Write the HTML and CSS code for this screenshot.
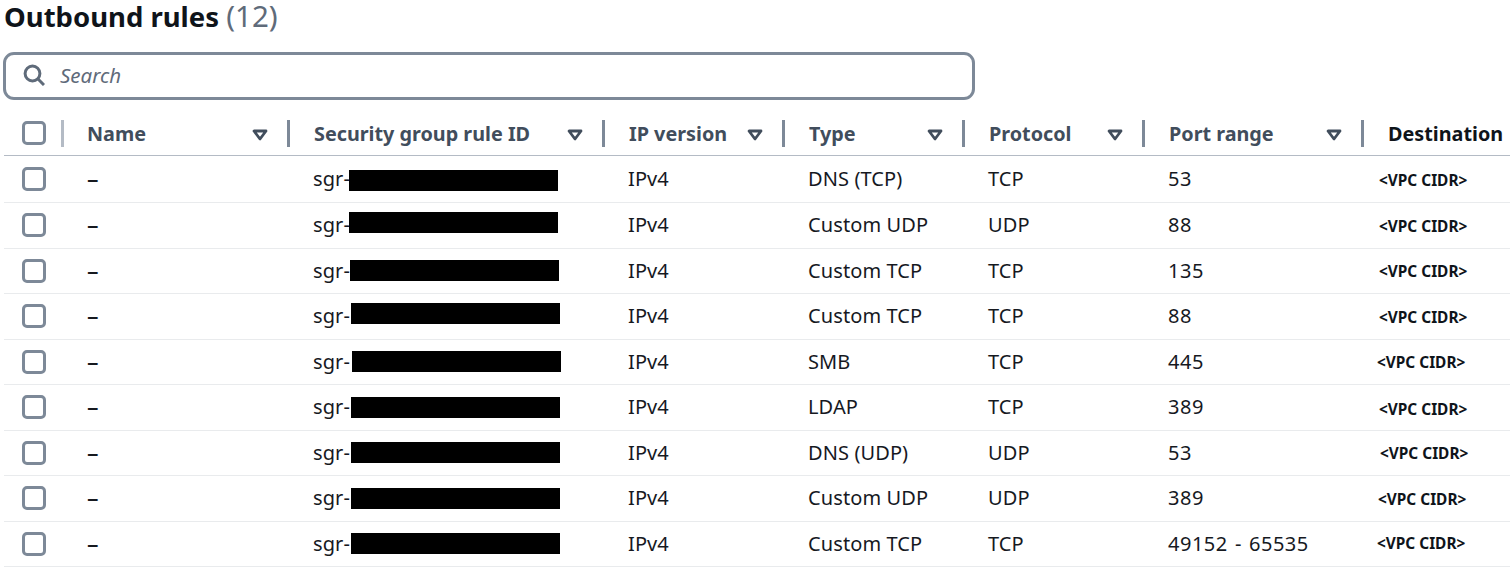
FILE: index.html
```
<!DOCTYPE html>
<html lang="en">
<head>
<meta charset="utf-8">
<title>Outbound rules</title>
<link rel="stylesheet" href="styles.css">
</head>
<body>
<main class="panel">
  <h1 class="title">Outbound rules <span class="count">(12)</span></h1>
  <div class="search">
    <svg class="search-icon" viewBox="0 0 22 22" aria-hidden="true"><circle cx="9.5" cy="9.5" r="7.4"/><path d="M14.8 14.8 21 21"/></svg>
    <span class="search-text">Search</span>
  </div>
  <div class="table">
    <div class="row head">
      <div class="cell check"><span class="box"></span></div>
      <div class="cell name sep-light">Name<svg class="sort" viewBox="0 0 16 12"><path d="M2 2h12L8 10z"/></svg></div>
      <div class="cell id">Security group rule ID<svg class="sort" viewBox="0 0 16 12"><path d="M2 2h12L8 10z"/></svg></div>
      <div class="cell ip">IP version<svg class="sort" viewBox="0 0 16 12"><path d="M2 2h12L8 10z"/></svg></div>
      <div class="cell type">Type<svg class="sort" viewBox="0 0 16 12"><path d="M2 2h12L8 10z"/></svg></div>
      <div class="cell proto">Protocol<svg class="sort" viewBox="0 0 16 12"><path d="M2 2h12L8 10z"/></svg></div>
      <div class="cell port">Port range<svg class="sort" viewBox="0 0 16 12"><path d="M2 2h12L8 10z"/></svg></div>
      <div class="cell dest">Destination</div>
    </div>
    <div class="row"><div class="cell check"><span class="box"></span></div><div class="cell name"><span class="dash">–</span></div><div class="cell id">sgr-<span class="redact"></span></div><div class="cell ip">IPv4</div><div class="cell type">DNS (TCP)</div><div class="cell proto">TCP</div><div class="cell port">53</div><div class="cell dest"><span class="cidr">&lt;VPC CIDR&gt;</span></div></div>
    <div class="row"><div class="cell check"><span class="box"></span></div><div class="cell name"><span class="dash">–</span></div><div class="cell id">sgr-<span class="redact"></span></div><div class="cell ip">IPv4</div><div class="cell type">Custom UDP</div><div class="cell proto">UDP</div><div class="cell port">88</div><div class="cell dest"><span class="cidr">&lt;VPC CIDR&gt;</span></div></div>
    <div class="row"><div class="cell check"><span class="box"></span></div><div class="cell name"><span class="dash">–</span></div><div class="cell id">sgr-<span class="redact"></span></div><div class="cell ip">IPv4</div><div class="cell type">Custom TCP</div><div class="cell proto">TCP</div><div class="cell port">135</div><div class="cell dest"><span class="cidr">&lt;VPC CIDR&gt;</span></div></div>
    <div class="row"><div class="cell check"><span class="box"></span></div><div class="cell name"><span class="dash">–</span></div><div class="cell id">sgr-<span class="redact"></span></div><div class="cell ip">IPv4</div><div class="cell type">Custom TCP</div><div class="cell proto">TCP</div><div class="cell port">88</div><div class="cell dest"><span class="cidr">&lt;VPC CIDR&gt;</span></div></div>
    <div class="row"><div class="cell check"><span class="box"></span></div><div class="cell name"><span class="dash">–</span></div><div class="cell id">sgr-<span class="redact"></span></div><div class="cell ip">IPv4</div><div class="cell type">SMB</div><div class="cell proto">TCP</div><div class="cell port">445</div><div class="cell dest"><span class="cidr">&lt;VPC CIDR&gt;</span></div></div>
    <div class="row"><div class="cell check"><span class="box"></span></div><div class="cell name"><span class="dash">–</span></div><div class="cell id">sgr-<span class="redact"></span></div><div class="cell ip">IPv4</div><div class="cell type">LDAP</div><div class="cell proto">TCP</div><div class="cell port">389</div><div class="cell dest"><span class="cidr">&lt;VPC CIDR&gt;</span></div></div>
    <div class="row"><div class="cell check"><span class="box"></span></div><div class="cell name"><span class="dash">–</span></div><div class="cell id">sgr-<span class="redact"></span></div><div class="cell ip">IPv4</div><div class="cell type">DNS (UDP)</div><div class="cell proto">UDP</div><div class="cell port">53</div><div class="cell dest"><span class="cidr">&lt;VPC CIDR&gt;</span></div></div>
    <div class="row"><div class="cell check"><span class="box"></span></div><div class="cell name"><span class="dash">–</span></div><div class="cell id">sgr-<span class="redact"></span></div><div class="cell ip">IPv4</div><div class="cell type">Custom UDP</div><div class="cell proto">UDP</div><div class="cell port">389</div><div class="cell dest"><span class="cidr">&lt;VPC CIDR&gt;</span></div></div>
    <div class="row"><div class="cell check"><span class="box"></span></div><div class="cell name"><span class="dash">–</span></div><div class="cell id">sgr-<span class="redact"></span></div><div class="cell ip">IPv4</div><div class="cell type">Custom TCP</div><div class="cell proto">TCP</div><div class="cell port">49152 - 65535</div><div class="cell dest"><span class="cidr">&lt;VPC CIDR&gt;</span></div></div>
  </div>
</main>
</body>
</html>
```

FILE: styles.css
```
* { box-sizing: border-box; }
html, body { margin: 0; background: #fff; overflow: hidden; }
body {
  font-family: "Noto Sans", "Open Sans", sans-serif;
  color: #16191f;
  width: 1510px;
  height: 571px;
}
.panel { padding: 0 0 0 4px; }
.title {
  margin: 0;
  height: 52px;
  font-size: 27.5px;
  line-height: 34px;
  font-weight: 700;
  color: #0f141a;
}
.count { display: inline-block; font-size: 29.5px; line-height: 30px; font-weight: 400; color: #5f6b7a; }
.search {
  margin-left: -1px;
  width: 972px;
  height: 48px;
  border: 3px solid #7d8998;
  border-radius: 11px;
  display: flex;
  align-items: center;
  padding: 0 0 2px 17px;
  gap: 15px;
}
.search-icon { width: 22px; height: 22px; fill: none; stroke: #5f6b7a; stroke-width: 3; }
.search-text { font-size: 20.5px; font-style: italic; color: #5f6b7a; }
.table { margin-top: 11px; }
.row {
  display: grid;
  grid-template-columns: 58px 226px 315px 180px 180px 180px 219px 148px;
  height: 45.5px;
  border-bottom: 1px solid #e9ebed;
  font-size: 20px;
  letter-spacing: 0.1px;
  align-items: center;
}
.row:nth-child(2) { height: 47px; }
.row.head {
  height: 45px;
  border-bottom: 1px solid #b4bbc5;
  font-size: 19.8px;
  letter-spacing: 0;
  font-weight: 700;
  color: #414d5c;
}
.cell {
  position: relative;
  padding-left: 25px;
  white-space: nowrap;
  display: flex;
  align-items: center;
}
.row:not(.head) .ip,
.row:not(.head) .type,
.row:not(.head) .proto,
.row:not(.head) .port,
.row:not(.head) .id { padding-bottom: 0.5px; }
.row:nth-child(3) .ip, .row:nth-child(3) .type, .row:nth-child(3) .proto, .row:nth-child(3) .port, .row:nth-child(3) .id,
.row:nth-child(5) .ip, .row:nth-child(5) .type, .row:nth-child(5) .proto, .row:nth-child(5) .port, .row:nth-child(5) .id,
.row:nth-child(7) .ip, .row:nth-child(7) .type, .row:nth-child(7) .proto, .row:nth-child(7) .port, .row:nth-child(7) .id,
.row:nth-child(9) .ip, .row:nth-child(9) .type, .row:nth-child(9) .proto, .row:nth-child(9) .port, .row:nth-child(9) .id { padding-bottom: 2px; }
.cell.check { padding-left: 18px; }
.box {
  width: 24px;
  height: 24px;
  border: 3px solid #7d8998;
  border-radius: 5px;
  background: #fff;
}
.head .cell { height: 27px; }
.head .cell::before {
  content: "";
  position: absolute;
  left: -1px;
  top: 0;
  width: 3px;
  height: 27px;
  background: #7d8998;
}
.head .check::before { display: none; }
.head .sep-light::before { background: #b4bbc5; }
.sort { width: 16px; height: 12px; position: absolute; right: 20px; top: 9px; fill: none; stroke: #414d5c; stroke-width: 2.8; stroke-linejoin: round; }
.head .dest { padding-left: 26px; color: #0f141a; }
.head .id, .head .ip, .head .type, .head .proto, .head .port { padding-left: 26px; }
.dash { font-size: 23px; line-height: 20px; font-weight: 500; margin-bottom: 2px; }
.row:not(.head) .port { letter-spacing: 0.5px; word-spacing: 1.5px; }
.redact { display: inline-block; width: 209px; height: 21px; background: #000; margin-left: 1px; }
.cidr { font-size: 15.4px; font-weight: 700; letter-spacing: 0; color: #0f141a; margin-left: -8px; }

/* The redaction bars and CIDR labels were pasted over by hand, so each row sits slightly differently. */
.row:nth-child(2) .redact { margin: 3px 0 0 -1px; }
.row:nth-child(3) .redact { margin: -4.5px 0 0 -1px; }
.row:nth-child(4) .redact { margin-left: 0; }
.row:nth-child(5) .redact { margin-top: -4.5px; }
.row:nth-child(6) .redact { margin-left: 2px; }
.row:nth-child(7) .redact,
.row:nth-child(9) .redact { margin-top: 1.5px; }

.row:nth-child(2) .cidr,
.row:nth-child(3) .cidr,
.row:nth-child(4) .cidr,
.row:nth-child(5) .cidr,
.row:nth-child(6) .cidr { margin-top: 2px; }
.row:nth-child(7) .cidr { margin-top: 5px; }
.row:nth-child(6) .cidr { margin-left: -10px; }
.row:nth-child(8) .cidr { margin-left: -7px; margin-top: 1px; }
.row:nth-child(9) .cidr { margin-left: -9px; margin-top: 2px; }
.row:nth-child(10) .cidr { margin-left: -10px; }
```
